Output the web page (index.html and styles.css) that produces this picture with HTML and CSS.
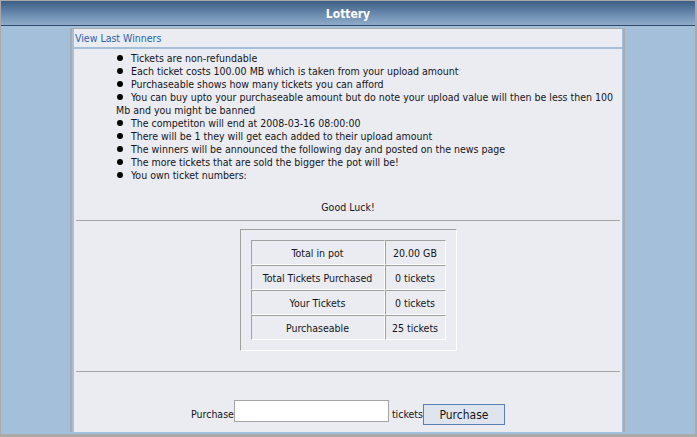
FILE: index.html
```html
<!DOCTYPE html>
<html>
<head>
<meta charset="utf-8">
<title>Lottery</title>
<link rel="stylesheet" href="styles.css">
</head>
<body>
<div class="frame">
  <div class="header">Lottery</div>
  <div class="panel">
    <div class="cell top"><a href="#" class="link">View Last Winners</a></div>
    <div class="cell main">
      <ul class="rules">
        <li>Tickets are non-refundable</li>
        <li>Each ticket costs 100.00 MB which is taken from your upload amount</li>
        <li>Purchaseable shows how many tickets you can afford</li>
        <li>You can buy upto your purchaseable amount but do note your upload value will then be less then 100 Mb and you might be banned</li>
        <li>The competiton will end at 2008-03-16 08:00:00</li>
        <li>There will be 1 they will get each added to their upload amount</li>
        <li>The winners will be announced the following day and posted on the news page</li>
        <li>The more tickets that are sold the bigger the pot will be!</li>
        <li>You own ticket numbers:</li>
      </ul>
      <p class="luck">Good Luck!</p>
      <hr class="rule">
      <div class="potbox">
        <table class="pot">
          <tr><td class="k">Total in pot</td><td class="v">20.00 GB</td></tr>
          <tr><td class="k">Total Tickets Purchased</td><td class="v">0 tickets</td></tr>
          <tr><td class="k">Your Tickets</td><td class="v">0 tickets</td></tr>
          <tr><td class="k">Purchaseable</td><td class="v">25 tickets</td></tr>
        </table>
      </div>
      <hr class="rule rule2">
      <form class="buy">
        <span class="lbl">Purchase</span>
        <input class="num" type="text">
        <span class="lbl tk">tickets</span>
        <button class="btn" type="button">Purchase</button>
      </form>
    </div>
  </div>
</div>
</body>
</html>
```
FILE: styles.css
```css
html, body {
  margin: 0;
  padding: 0;
}
body {
  font-family: "DejaVu Sans Condensed", "DejaVu Sans", sans-serif;
  font-size: 10.5px;
  color: #141420;
}
.frame {
  height: 437px;
  box-sizing: border-box;
  border-top: 1px solid #a9a9a9;
  border-left: 1px solid #a9a9a9;
  border-right: 2px solid #a9a9a9;
  border-bottom: 3px solid #a9a9a9;
  background: #a3bfd9;
  overflow: hidden;
}
.header {
  height: 24px;
  border-bottom: 1px solid #2d4c6d;
  background: linear-gradient(#3c5e85, #6f8fb2 60%, #8fabc8);
  color: #fff;
  font-weight: bold;
  font-size: 12px;
  line-height: 26px;
  text-align: center;
}
.panel {
  margin: 2px 0 0 69px;
  width: 548px;
  border-top: 1px solid #a9abae;
  border-left: 2px solid #a9abae;
  border-right: 2px solid #a9abae;
  padding: 0 1px 0 2px;
  display: flex;
  flex-direction: column;
  gap: 2px;
}
.cell {
  background: #ebecf2;
}
.top {
  height: 18px;
  line-height: 18px;
  padding-left: 1px;
}
.link {
  color: #1f63ad;
  text-decoration: none;
}
.main {
  height: 383px;
  padding-top: 3px;
  box-sizing: border-box;
}
.rules {
  list-style: none;
  margin: 0 0 0 42px;
  padding: 0;
  line-height: 13px;
}
.rules li::before {
  content: "";
  display: inline-block;
  width: 6px;
  height: 6px;
  border-radius: 50%;
  background: #000;
  margin: 0 8px 1px 1px;
}
.luck {
  margin: 19px 0 0;
  line-height: 13px;
  text-align: center;
}
.rule {
  border: 0;
  border-top: 1px solid #a4a4a8;
  height: 0;
  margin: 6px 2px 0;
}
.rule2 {
  margin-top: 20px;
}
.potbox {
  margin: 8px auto 0;
  width: 195px;
  padding: 10px 10px 10px 10px;
  border-top: 1px solid #a0a0a0;
  border-left: 1px solid #a0a0a0;
  border-right: 1px solid #fdfdfd;
  border-bottom: 1px solid #fdfdfd;
}
.pot {
  border-collapse: separate;
  border-spacing: 0;
  width: 195px;
}
.pot td {
  height: 23px;
  padding: 0;
  text-align: center;
  border-top: 1px solid #a0a0a0;
  border-left: 1px solid #a0a0a0;
  border-right: 1px solid #fdfdfd;
  border-bottom: 1px solid #fdfdfd;
}
.pot td.k {
  width: 132px;
}
.buy {
  display: flex;
  justify-content: center;
  align-items: flex-start;
  margin: 28px 0 0;
  height: 25px;
}
.lbl {
  line-height: 13px;
  margin-top: 8px;
}
.tk {
  margin-left: 3px;
}
.num {
  width: 155px;
  height: 22px;
  box-sizing: border-box;
  border: 1px solid #a5a5a5;
  background: #fff;
  margin: 0;
  padding: 0 2px;
}
.btn {
  width: 82px;
  height: 21px;
  box-sizing: border-box;
  margin: 4px 0 0;
  border: 1px solid #5a80b8;
  background: #dfe5ef;
  font-family: inherit;
  font-size: 12px;
  color: #141420;
  padding: 0;
}
```
